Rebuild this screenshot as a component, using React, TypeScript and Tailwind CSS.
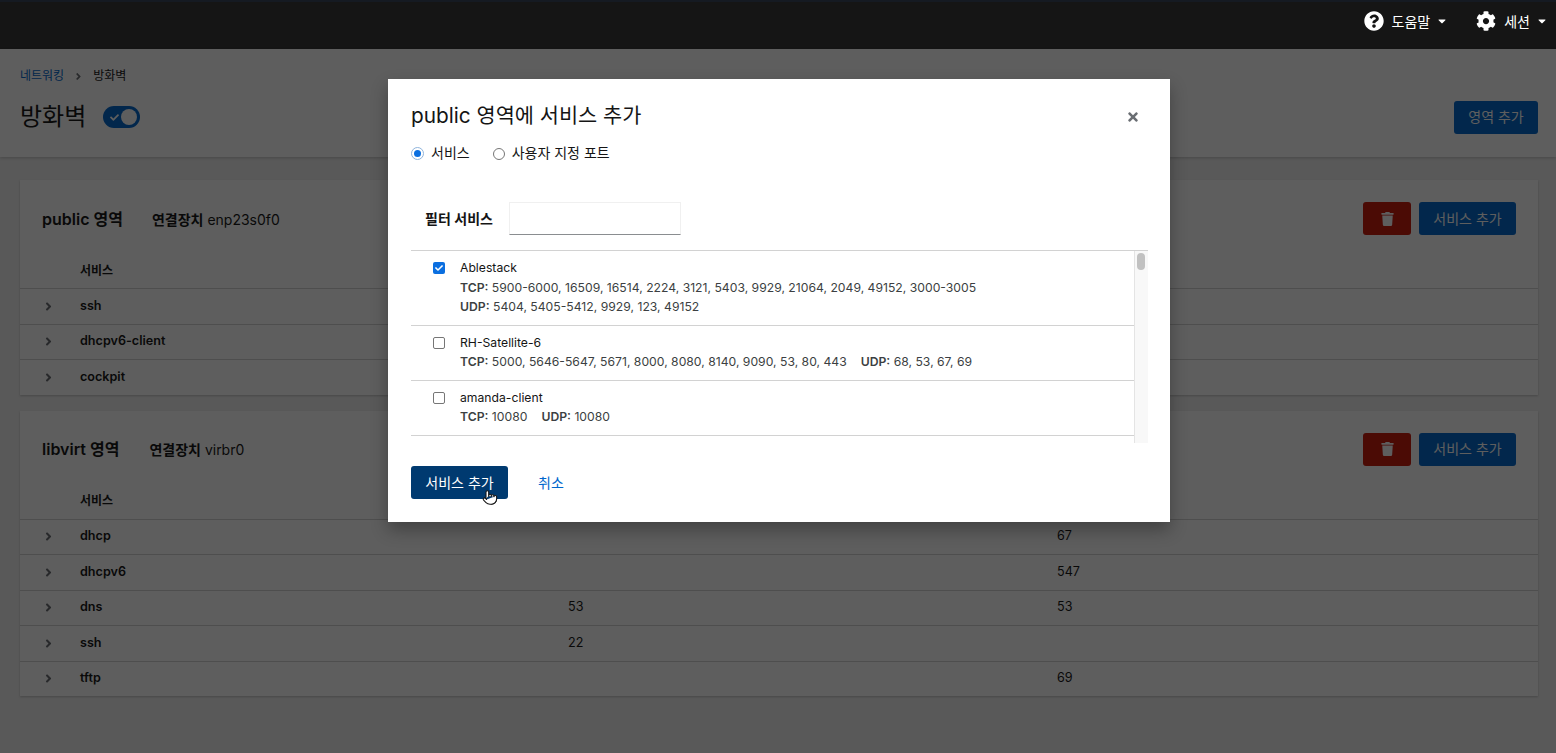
import { FaQuestionCircle, FaCog, FaCaretDown, FaTrash, FaAngleRight, FaTimes, FaCheck } from 'react-icons/fa'
import { Pointer } from 'lucide-react'

interface Row { name: string; tcp?: string; udp?: string }

const publicRows: Row[] = [{ name: 'ssh' }, { name: 'dhcpv6-client' }, { name: 'cockpit' }]
const libvirtRows: Row[] = [
  { name: 'dhcp', udp: '67' },
  { name: 'dhcpv6', udp: '547' },
  { name: 'dns', tcp: '53', udp: '53' },
  { name: 'ssh', tcp: '22' },
  { name: 'tftp', udp: '69' },
]

function HeaderMenu({ icon, label }: { icon: React.ReactNode; label: string }) {
  return (
    <div className="flex items-center text-white text-[14px]">
      {icon}
      <span className="ml-[8px]">{label}</span>
      <FaCaretDown className="ml-[6px] w-[12px] h-[12px]" />
    </div>
  )
}

function Zone({ title, device, gap, rows }: { title: string; device: string; gap: string; rows: Row[] }) {
  return (
    <section className="bg-white shadow-[0_1px_2px_rgba(0,0,0,0.2)]">
      <div className="flex items-center justify-between h-[77px] px-[22px]">
        <div className="flex items-baseline">
          <h2 className="text-[16px] font-semibold text-[#151515]">{title}</h2>
          <div className={`text-[14px] text-[#151515] ${gap}`}>
            <span className="font-semibold">연결장치</span> {device}
          </div>
        </div>
        <div className="flex gap-[8px]">
          <button className="w-[48px] h-[33px] rounded-[3px] bg-[#c9190b] flex items-center justify-center text-white">
            <FaTrash className="w-[13px] h-[14px]" />
          </button>
          <button className="w-[97px] h-[33px] pb-[1px] rounded-[3px] bg-[#0066cc] text-white text-[14px]">서비스 추가</button>
        </div>
      </div>
      <div className="h-[31px] pl-[60px] pb-[4px] text-[12px] font-semibold text-[#151515] flex items-center">서비스</div>
      {rows.map(r => (
        <div key={r.name + title} className="h-[35.5px] border-t border-[#d2d2d2] flex items-center text-[12.6px] text-[#151515]">
          <div className="w-[60px] flex justify-center text-[#6a6e73]">
            <FaAngleRight className="w-[13px] h-[13px] -ml-[3px]" />
          </div>
          <div className="w-[488px] font-semibold">{r.name}</div>
          <div className="w-[489px]">{r.tcp}</div>
          <div>{r.udp}</div>
        </div>
      ))}
    </section>
  )
}

function ServiceRow({ name, checked, lines }: { name: string; checked?: boolean; lines: { tcp?: string; udp?: string }[] }) {
  return (
    <div className="flex border-b border-[#d2d2d2] pt-[7px] pb-[8px] pl-[22px]">
      <div className="w-[27px] pt-[4px]">
        {checked ? (
          <div className="w-[12px] h-[12px] rounded-[2px] bg-[#0b6fe0] flex items-center justify-center">
            <FaCheck className="w-[8px] h-[8px] text-white" />
          </div>
        ) : (
          <div className="w-[12px] h-[12px] rounded-[2px] border border-[#767676] bg-white" />
        )}
      </div>
      <div className="text-[12.2px] leading-[19.5px] text-[#3c3f42]">
        <div className="text-[#151515]">{name}</div>
        {lines.map((l, i) => (
          <div key={i}>
            {l.tcp && <span className="mr-[14px]"><b className="font-semibold">TCP:</b> {l.tcp}</span>}
            {l.udp && <span><b className="font-semibold">UDP:</b> {l.udp}</span>}
          </div>
        ))}
      </div>
    </div>
  )
}

export default function App() {
  return (
    <div className="h-screen overflow-hidden flex flex-col bg-[#f0f0f0] font-['Inter','Noto_Sans_CJK_KR',sans-serif]">
      {/* Masthead */}
      <header className="h-[49px] shrink-0 bg-[#151515] flex items-center justify-end gap-[28px] pr-[8px] pb-[9px] border-t-2 border-[#151a22]">
        <HeaderMenu icon={<FaQuestionCircle className="w-[20px] h-[20px]" />} label="도움말" />
        <HeaderMenu icon={<FaCog className="w-[20px] h-[20px]" />} label="세션" />
      </header>

      <main className="relative flex-1 min-h-0">
        {/* Page */}
        <div className="bg-white h-[108px] pl-[20px] pr-[18px] pt-[19px] shadow-[0_1px_3px_rgba(0,0,0,0.2)] relative">
          <div className="flex items-center text-[12px] text-[#151515] h-[16px]">
            <span className="text-[#0066cc]">네트워킹</span>
            <FaAngleRight className="w-[11px] h-[11px] mx-[9px] text-[#6a6e73]" />
            <span>방화벽</span>
          </div>
          <div className="flex items-center justify-between mt-[15px]">
            <div className="flex items-center">
              <h1 className="text-[24px] text-[#151515]">방화벽</h1>
              <div className="ml-[17px] w-[37px] h-[22px] rounded-full bg-[#0066cc] flex items-center justify-between pl-[7px] pr-[3px]">
                <FaCheck className="w-[9px] h-[9px] text-white" />
                <div className="w-[16px] h-[16px] rounded-full bg-white" />
              </div>
            </div>
            <button className="w-[84px] h-[33px] pb-[1px] rounded-[3px] bg-[#0066cc] text-white text-[14px]">영역 추가</button>
          </div>
        </div>

        <div className="pl-[20px] pr-[18px] pt-[23px] flex flex-col gap-[16px]">
          <Zone title="public 영역" device="enp23s0f0" gap="ml-[29px]" rows={publicRows} />
          <Zone title="libvirt 영역" device="virbr0" gap="ml-[30px]" rows={libvirtRows} />
        </div>

        {/* Backdrop + dialog */}
        <div className="absolute inset-0 bg-[rgba(3,3,3,0.64)] flex justify-center items-start pt-[30px] pl-[2px]">
          <div className="w-[782px] h-[443px] bg-white pl-[23px] pr-[22px] pt-[22px] flex flex-col shadow-[0_8px_16px_rgba(0,0,0,0.3)] relative">
            <div className="flex items-center justify-between h-[30px]">
              <h2 className="text-[20.8px] text-[#151515]">public 영역에 서비스 추가</h2>
              <FaTimes className="w-[14px] h-[14px] text-[#6a6e73] mr-[8px] mt-[1px]" />
            </div>
            <div className="flex items-center mt-[11px] text-[14px] text-[#151515] h-[20px]">
              <div className="w-[13px] h-[13px] rounded-full border border-[#8fb4dc] flex items-center justify-center mr-[7px] mt-[3px]">
                <div className="w-[7px] h-[7px] rounded-full bg-[#0b6fe0]" />
              </div>
              <span>서비스</span>
              <div className="w-[12px] h-[12px] rounded-full border border-[#767676] ml-[23px] mr-[7px] mt-[3px]" />
              <span>사용자 지정 포트</span>
            </div>
            <div className="flex items-center mt-[40px] pl-[14px]">
              <label className="w-[84px] text-[14px] font-semibold text-[#151515]">필터 서비스</label>
              <div className="w-[172px] h-[33px] border border-[#f0f0f0] border-b-[#8a8d90]" />
            </div>
            <div className="flex h-[193px] mt-[15px] border-t border-[#d2d2d2] overflow-hidden">
              <div className="flex-1 min-w-0">
                <ServiceRow name="Ablestack" checked lines={[
                  { tcp: '5900-6000, 16509, 16514, 2224, 3121, 5403, 9929, 21064, 2049, 49152, 3000-3005' },
                  { udp: '5404, 5405-5412, 9929, 123, 49152' },
                ]} />
                <ServiceRow name="RH-Satellite-6" lines={[
                  { tcp: '5000, 5646-5647, 5671, 8000, 8080, 8140, 9090, 53, 80, 443', udp: '68, 53, 67, 69' },
                ]} />
                <ServiceRow name="amanda-client" lines={[{ tcp: '10080', udp: '10080' }]} />
              </div>
              <div className="w-[14px] shrink-0 bg-[#f8f8f8] border-l border-[#e4e4e4] pl-[2px] pt-[2px]">
                <div className="w-[8px] h-[17px] rounded-full bg-[#c1c1c1]" />
              </div>
            </div>
            <div className="flex items-center mt-[23px]">
              <button className="w-[97px] h-[33px] pb-[1px] rounded-[3px] bg-[#003a70] text-white text-[14px]">서비스 추가</button>
              <button className="ml-[30px] pb-[1px] text-[14px] text-[#0066cc]">취소</button>
            </div>
            <Pointer className="absolute left-[94px] top-[409px] w-[16px] h-[19px] fill-white text-[#151515]" strokeWidth={1.6} />
          </div>
        </div>
      </main>
    </div>
  )
}
